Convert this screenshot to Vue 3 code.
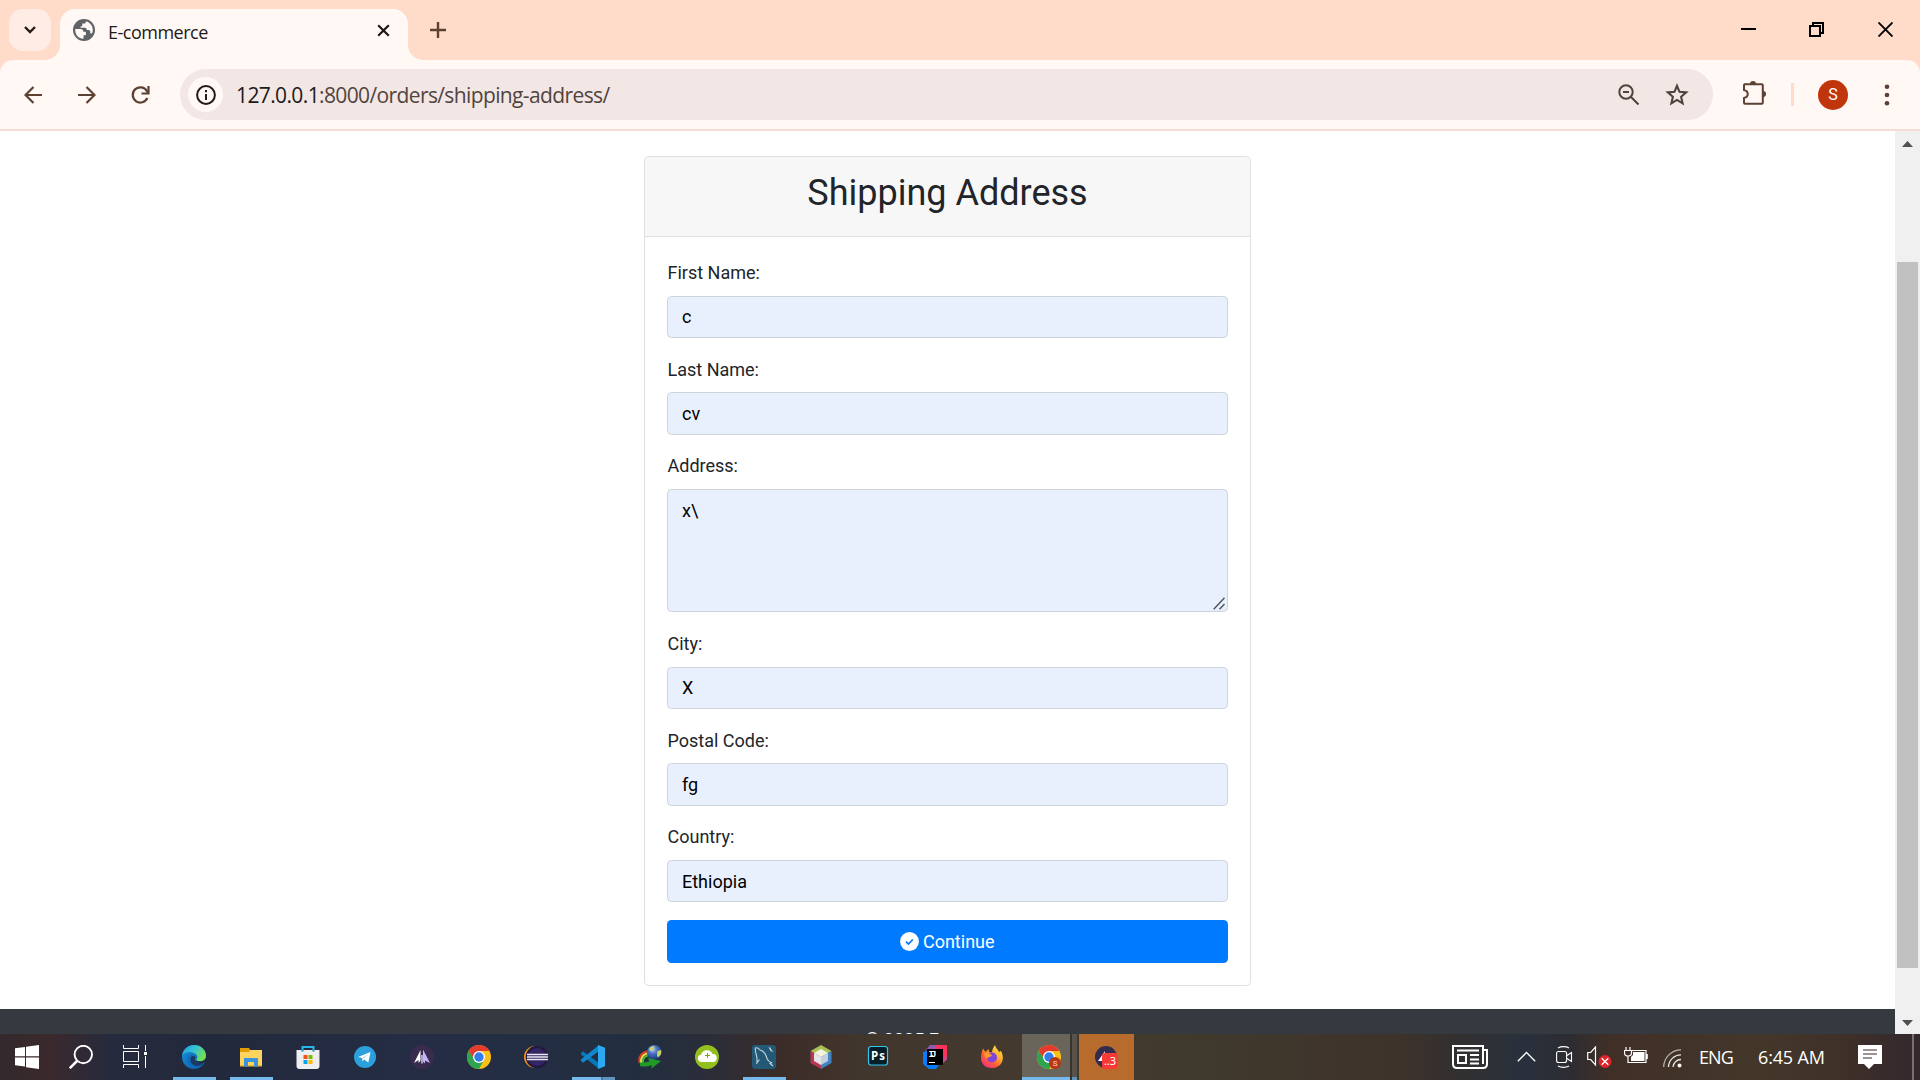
<script setup>
const fields = [
  { id: 'first', label: 'First Name:', value: 'c' },
  { id: 'last', label: 'Last Name:', value: 'cv' },
  { id: 'address', label: 'Address:', value: 'x\\', area: true },
  { id: 'city', label: 'City:', value: 'X' },
  { id: 'postal', label: 'Postal Code:', value: 'fg' },
  { id: 'country', label: 'Country:', value: 'Ethiopia' },
]
</script>

<template>
  <div class="screen">
    <header class="tabstrip">
      <button class="tabsearch" aria-label="Search tabs">
        <svg width="14" height="10" viewBox="0 0 14 10"><path d="M2 2l5 5 5-5" fill="none" stroke="#241a17" stroke-width="2.4" /></svg>
      </button>
      <div class="tab">
        <svg class="flare left" width="15" height="15"><path d="M15 0v15H0A15 15 0 0 0 15 0z" fill="#fff8f5" /></svg>
        <svg class="flare right" width="15" height="15"><path d="M0 0v15h15A15 15 0 0 1 0 0z" fill="#fff8f5" /></svg>
        <svg class="globe" width="22" height="22" viewBox="0 0 22 22">
          <circle cx="11" cy="11" r="11" fill="#5f6368" />
          <path d="M2.200 10h5.300c1.800 0 2.800 1 2.800 2.700H12c.6 0 .9.400.9 1v1.500c0 .7-.4 1-1 1h-1.400v3.500C5.500 19.700 2 16 2.200 10z" fill="#fff8f5" />
          <path d="M12.800 2.300c.2 1.600-.6 2.300-1.800 2.300H9.300v1.700c0 .8-.6 1.200-1.800 1.200v1.200h4.300c1.600 0 2 1 2 2.300h1.600c1.300 0 1.900.8 1.900 2v1.600h1.400c.9-1.300 1.200-2.600 1.100-4.200-.3-4-3-7.200-7-8.100z" fill="#fff8f5" />
        </svg>
        <span class="tabtitle">E-commerce</span>
        <svg width="13" height="13" viewBox="0 0 13 13"><path d="M1.200 1.200l10.600 10.600M11.800 1.200L1.200 11.800" stroke="#1d1613" stroke-width="2.200" /></svg>
      </div>
      <svg class="plus" width="16" height="16" viewBox="0 0 16 16"><path d="M8 0v16M0 8h16" stroke="#5c4032" stroke-width="2.400" /></svg>
      <div class="windowbtns">
        <svg width="15" height="15"><path d="M0 7h15" stroke="#000" stroke-width="2" /></svg>
        <svg width="15" height="15" fill="none" stroke="#000" stroke-width="2"><path d="M1 4h10v10H1zM4 4V1h10v10h-3" /></svg>
        <svg width="15" height="15"><path d="M.5.5l14 14M14.500.5l-14 14" stroke="#000" stroke-width="1.900" /></svg>
      </div>
    </header>

    <div class="toolwrap">
      <div class="toolbar">
        <svg class="nav" width="18" height="18" viewBox="0 0 18 18"><path d="M9.500 1L1.500 9l8 8M1.500 9H18" /></svg>
        <svg class="nav fwd" width="18" height="18" viewBox="0 0 18 18"><path d="M8.500 1l8 8-8 8M16.500 9H0" /></svg>
        <svg class="nav rel" width="19" height="20" viewBox="0 0 19 20"><path d="M16.300 13A7.600 7.600 0 1 1 16 6.200l1 1.800" /><path d="M17.500 1v7.500H10.500" /></svg>
        <div class="omnibox">
          <span class="info">
            <svg width="20" height="20" viewBox="0 0 20 20"><circle cx="10" cy="10" r="8.900" fill="none" stroke="#241a17" stroke-width="2" /><path d="M10 9v6M10 5v2.200" stroke="#241a17" stroke-width="2" /></svg>
          </span>
          <span class="url"><b>127.0.0.1</b>:8000/orders/shipping-address/</span>
          <svg class="zoomicon" width="22" height="22" viewBox="0 0 22 22" fill="none" stroke="#4f433e" stroke-width="2"><circle cx="8" cy="8" r="6.700" /><path d="M5 8h6M13 13l7.500 7.500" /></svg>
          <svg width="24" height="23" viewBox="0 0 24 23"><path d="M12 2.800l2.500 6 6.700.6-5.100 4.400 1.500 6.500L12 16.900l-5.600 3.400 1.500-6.500-5.100-4.400 6.700-.6z" fill="none" stroke="#4f433e" stroke-width="2.100" /></svg>
        </div>
        <svg class="puzzle" width="25" height="25" viewBox="0 0 25 25"><path d="M2 4.200h17.800q1 0 1 1v17.600q0 1-1 1H3q-1 0-1-1V18c5-1 5-7 0-8V5.200q0-1 1-1z" fill="none" stroke="#5c4032" stroke-width="2" /><path d="M8 4a3 3 0 0 1 6 0zM21 11a3 3 0 0 1 0 6z" fill="#5c4032" /></svg>
        <span class="divider"></span>
        <span class="avatar">S</span>
        <svg class="kebab" width="6" height="22" fill="#5c4032"><circle cx="3" cy="2.700" r="2.300" /><circle cx="3" cy="11" r="2.300" /><circle cx="3" cy="19.300" r="2.300" /></svg>
      </div>
    </div>

    <div class="viewport">
      <main class="page">
        <section class="card">
          <h2>Shipping Address</h2>
          <form class="cardbody" @submit.prevent>
            <div v-for="f in fields" :key="f.id" class="group">
              <label :for="f.id">{{ f.label }}</label>
              <div v-if="f.area" class="areabox">
                <textarea :id="f.id" rows="4" :value="f.value" spellcheck="false"></textarea>
                <svg width="12" height="13" viewBox="0 0 12 13"><path d="M.7 12.300L11.500.7M6.500 12.300l5-5.300" stroke="#50545b" stroke-width="1.400" /></svg>
              </div>
              <input v-else :id="f.id" :value="f.value" />
            </div>
            <button class="continue">
              <svg width="19" height="19" viewBox="0 0 19 19"><circle cx="9.500" cy="9.500" r="9.400" fill="#fff" /><path d="M6 9.700l2.400 2.400 4.400-4.600" fill="none" stroke="#007bff" stroke-width="1.700" /></svg>
              <span>Continue</span>
            </button>
          </form>
        </section>
        <footer>© 2025 E-commerce</footer>
      </main>
      <aside class="scrollbar">
        <svg width="11" height="6"><path d="M0 6L5.500 0 11 6z" fill="#505050" /></svg>
        <span class="thumb"></span>
        <svg width="11" height="6"><path d="M0 0l5.500 6L11 0z" fill="#505050" /></svg>
      </aside>
    </div>

    <nav class="taskbar">
      <div class="sys"><svg viewBox="0 0 24 24"><path d="M0 3.300L10 2v9.300H0zM11 1.800L24 0v11.300H11zM0 12.400h10v9.200L0 20.300zM11 12.400h13V24l-13-1.800z" fill="#fff" /></svg></div>
      <div class="sys"><svg viewBox="0 0 24 24" fill="none" stroke="#fff"><circle cx="14.300" cy="9.500" r="8.700" stroke-width="1.900" /><path d="M8 16L.8 23.200" stroke-width="2.500" /></svg></div>
      <div class="sys"><svg viewBox="0 0 24 24" fill="none" stroke="#fff"><path d="M.5 0v3.500h15V0M.5 6.500h15v10H.5zM.5 23v-3.500h15V23M22.500 0v6M22.500 11v12" stroke-width="1" /><path d="M22.500 7v3" stroke-width="3" /></svg></div>
      <div class="gap"></div>

      <div class="app open">
        <svg viewBox="0 0 24 24">
          <defs>
            <linearGradient id="edgeTop" x1="0" y1="0" x2="1" y2=".5"><stop offset="0" stop-color="#1b9de2" /><stop offset=".5" stop-color="#35c1d8" /><stop offset="1" stop-color="#6fe04f" /></linearGradient>
            <linearGradient id="edgeLow" x1="0" y1="0" x2="1" y2="1"><stop offset="0" stop-color="#1691dc" /><stop offset="1" stop-color="#0c59a4" /></linearGradient>
          </defs>
          <circle cx="12" cy="12" r="12" fill="url(#edgeLow)" />
          <path d="M.2 10.500C1 4.500 6 0 12 0c7 0 12 5 12 10.500 0 4-3 5.800-6 5.800-2.500 0-4-1-3.500-2 1.400-1.500 1-3.500-.3-4.800C11.500 6.500 4 5.500.2 10.500z" fill="url(#edgeTop)" />
          <path d="M8.500 13c-1.500 5 3.500 9.500 9 7.500 2-.7 3.600-1.800 4.800-3.300C20 18.200 16 18.500 14 16.500c-1.300-1.200-1.300-2.500-.5-4.500-1.500-1.500-4.300-1.200-5 1z" fill="#1b3a66" />
          <path d="M24 16.300c-1.500 1.300-4 2.200-6.500 1.800-2-.3-3.300-1-3.500-2.300l4 .7c2.500 0 4.500-1.200 5.700-3z" fill="#23293c" />
          <path d="M5.500 15C5 10 9.500 8.500 12.500 10c-6 0-6 9 1 11.500 1.500.5 3 .3 3.800 0C12 25.500 6 21 5.500 15z" fill="#136bb8" />
        </svg>
      </div>
      <div class="app open">
        <svg viewBox="0 0 24 24"><path d="M1 3h9l1.500 2.500V8H1z" fill="#e09d00" /><path d="M11 5h12v16H1V7h9z" fill="#ffd45e" /><path d="M1 20h22v1.500H1z" fill="#f0b93a" /><path d="M5 13h14v8.500h-4V17H9v4.500H5z" fill="#3a93dd" /></svg>
      </div>
      <div class="app">
        <svg viewBox="0 0 24 24"><path d="M6.500 6V2h11v4" fill="none" stroke="#28b5e8" stroke-width="2" /><path d="M.5 5h23v16q0 3-3 3h-17q-3 0-3-3z" fill="#eeeeee" /><path d="M5.500 5h2v1.500h-2zM16.500 5h2v1.500h-2z" fill="#1488c8" /><path d="M7.500 10h4v4h-4z" fill="#f25022" /><path d="M12.500 10h4v4h-4z" fill="#7fba00" /><path d="M7.500 15h4v4h-4z" fill="#00a4ef" /><path d="M12.500 15h4v4h-4z" fill="#ffb900" /></svg>
      </div>
      <div class="app">
        <svg viewBox="0 0 24 24"><circle cx="12" cy="12" r="11" fill="#2ba0dc" /><path d="M5 12l12.500-5-2.200 10.500-4-3-1.800 1.800-.3-3.300z" fill="#fff" /><path d="M9.200 13l6.500-4.200-4.900 5z" fill="#b7d8ec" /></svg>
      </div>
      <div class="app">
        <svg viewBox="0 0 24 24"><circle cx="12" cy="12" r="12" fill="#392b4e" /><path d="M10.500 5v10.500L8.500 18v-3L4 18z" fill="#fff" /><path d="M13 4.500L20 18l-5-2.500v3l-2-2z" fill="#c6b5f5" /><path d="M11 10h2v9l-1-1-1 1z" fill="#aaa0c7" /></svg>
      </div>
      <div class="app">
        <svg viewBox="0 0 24 24"><circle cx="12" cy="12" r="12" fill="#fbc116" /><path d="M1.600 6A12 12 0 0 0 12 24l5-9-9.500-1z" fill="#2da44e" /><path d="M1.600 6A12 12 0 0 1 22.400 6H12l-4.500 8z" fill="#e33b2e" /><circle cx="12" cy="12" r="6" fill="#fff" /><circle cx="12" cy="12" r="4.700" fill="#327ee9" /></svg>
      </div>
      <div class="app">
        <svg viewBox="0 0 24 24"><circle cx="11" cy="12" r="11" fill="#f7941e" /><circle cx="13" cy="12" r="11.300" fill="#211b43" /><circle cx="13" cy="12" r="9" fill="#352565" /><path d="M3 9.500h21M3 12h21M3 14.500h21" stroke="#e9e7f0" stroke-width="1.500" /></svg>
      </div>
      <div class="app open grouped">
        <svg viewBox="0 0 24 24"><path d="M0 8l2-1.700L18 18v6L0 9.500z" fill="#0877b9" /><path d="M0 16l2 1.700L18 6V0L0 14.500z" fill="#1387ce" /><path d="M17 0l7 2.800v18.400L17 24z" fill="#2aa9f2" /></svg>
      </div>
      <div class="app idm">
        <svg viewBox="0 0 24 24">
          <defs><radialGradient id="ball" cx=".4" cy=".3" r=".7"><stop offset="0" stop-color="#b9cdf0" /><stop offset=".4" stop-color="#4a74c4" /><stop offset="1" stop-color="#16357c" /></radialGradient></defs>
          <g fill="none" stroke-width="1.900"><path d="M1.500 18C0 11 5 5.500 12 6.500" stroke="#e23a2a" /><path d="M3.200 18C2.200 12.500 6 8 12 8.300" stroke="#f6e13b" /><path d="M5 18c-.8-4.500 2-7.500 7-8" stroke="#49b53a" /></g>
          <circle cx="16.300" cy="7.500" r="7.400" fill="url(#ball)" />
          <path d="M11 4c1.500-2.500 4-3 5.500-2.500-.5 2-2.500 2.500-2.500 4.500-1.500.5-2.500-.5-3-2zM19.500 6l3.500-1c1 3-.5 6-3 7.500-1.500-2-1-4.500-.5-6.500z" fill="#ccd25e" />
          <path d="M2 17.500q5 .5 9.500-1.200L10 13l13 3-9.500 7.500.2-3.500Q8 22.500 2 21z" fill="#229a26" />
        </svg>
      </div>
      <div class="app">
        <svg viewBox="0 0 24 24"><circle cx="12" cy="12" r="12" fill="#93c01f" /><path d="M6 17a3.800 3.800 0 0 1 .2-7.500A6 6 0 0 1 17.500 9a4 4 0 0 1 .5 8z" fill="#fff" /><path d="M12.500 8v5M10 10.500h5" stroke="#74a40d" stroke-width="1" /></svg>
      </div>
      <div class="app open">
        <svg viewBox="0 0 24 24"><rect width="24" height="24" rx="3" fill="#235877" /><path d="M4.500 19c1-2 .5-4 .3-6.500C4.600 9 2.500 5.500 3.500 3c2-.8 3.500.8 4.500 2 4 1 6 4.500 7 8.500.6 2 2.500 3.500 4.500 4.300l-1.500.7 3 2.500M4.800 18l2.700-3.500" fill="none" stroke="#c6d7df" stroke-width="1.100" /><path d="M16.500 2l2 .8 1 2L21.500 7l-3-1z" fill="#c6d7df" /></svg>
      </div>
      <div class="app">
        <svg viewBox="0 0 24 24"><path d="M12 0l10.500 6L12 12 1.500 6z" fill="#a9bf54" /><path d="M1.500 6L12 12v12L1.500 18z" fill="#b73555" /><path d="M22.500 6L12 12v12l10.500-6z" fill="#4283c4" /><path d="M12 4l7 4-7 4-7-4z" fill="#f1f3df" /><path d="M5 8l7 4v8l-7-4z" fill="#e4e4e6" /><path d="M19 8l-7 4v8l7-4z" fill="#c1cfdf" /></svg>
      </div>
      <div class="app">
        <svg viewBox="0 0 24 24"><rect x="2.500" y="1.500" width="19" height="18.500" rx="2.500" fill="#071e28" stroke="#31c5f0" stroke-width="1.200" /><text x="5" y="15" font-size="11.500" font-weight="700" font-family="Noto Sans, sans-serif" fill="#fff" textLength="14">Ps</text></svg>
      </div>
      <div class="app">
        <svg viewBox="0 0 24 24"><path d="M0 7l7-2v15h9l-3 4H6l-6-5z" fill="#087cfa" /><path d="M7 0h12v5H4L2 6z" fill="#8f5bb5" /><path d="M13 0h11v14l-6 6V5h-5z" fill="#fe315d" /><path d="M20 14l4-3v3l-6 6h2z" fill="#c04d93" /><rect x="4" y="4" width="16" height="16" fill="#000" /><text x="5.500" y="12" font-size="9" font-weight="700" font-family="Liberation Mono, monospace" fill="#fff" textLength="8">IJ</text><path d="M6 17.500h6" stroke="#fff" /></svg>
      </div>
      <div class="app">
        <svg viewBox="0 0 24 24">
          <defs><linearGradient id="fox" x1="1" y1="0" x2=".2" y2="1"><stop offset="0" stop-color="#fff44f" /><stop offset=".4" stop-color="#ffb22e" /><stop offset=".7" stop-color="#ff5b36" /><stop offset="1" stop-color="#f0308a" /></linearGradient></defs>
          <path d="M1 13C1 9 2.500 5 3 3.500L5.500 7l3-3 .5 3 3 .5C12 5 13.500 2 15 0c1 4 3 4 4 7l2-1c2 4 2.500 7 1 11-2 4-6 6-10.500 6C5.500 23 1 19 1 13z" fill="url(#fox)" /><circle cx="12" cy="12.500" r="5" fill="#8046dc" /><path d="M4 8c3 0 5 0 8 2-1 3-4 1-5 4C5 13 4 10 4 8z" fill="#ff9626" />
        </svg>
      </div>
      <div class="app current">
        <svg viewBox="0 0 24 24"><circle cx="12" cy="12" r="12" fill="#fbc116" /><path d="M1.600 6A12 12 0 0 0 12 24l5-9-9.500-1z" fill="#2da44e" /><path d="M1.600 6A12 12 0 0 1 22.400 6H12l-4.500 8z" fill="#e33b2e" /><circle cx="12" cy="12" r="6" fill="#fff" /><circle cx="12" cy="12" r="4.700" fill="#327ee9" /><circle cx="18" cy="18" r="6" fill="#b93613" /><text x="18" y="21" text-anchor="middle" font-size="8" font-family="Roboto, sans-serif" fill="#ffd9cc">S</text></svg>
      </div>
      <div class="app alert">
        <svg viewBox="0 0 24 24"><circle cx="12" cy="12" r="11" fill="#332b4d" /><path d="M11 6L4 16h6z" fill="#fff" /><rect x="8" y="8" width="16" height="16" rx="3" fill="#f93a37" /><text x="16" y="20" text-anchor="middle" font-size="11" font-family="Noto Sans, sans-serif" fill="#fff">..3</text></svg>
      </div>

      <div class="tray">
        <svg class="news" width="36" height="24" viewBox="0 0 36 24" fill="none" stroke="#fff" stroke-width="2"><path d="M31 4V1H1v18q0 4 4 4h26q4 0 4-4V5h-4v14" /><path d="M5 5.500h22M18 10h9M18 14.500h9M18 18.500h9M6 10h8v8H6z" /></svg>
        <svg class="up" width="19" height="11"><path d="M.8 10.200L9.500 1.500l8.700 8.700" fill="none" stroke="#fff" stroke-width="1.300" /></svg>
        <svg class="cam" width="17" height="22" viewBox="0 0 17 22" fill="none" stroke="#fff" stroke-width="1.100"><rect x=".6" y="5.500" width="10" height="11" rx="2" /><path d="M11 9.500l4.500-3v9l-4.500-3M2 2c3-1.800 8-1.800 11 0M2 20c3 1.800 8 1.800 11 0" /></svg>
        <svg class="spk" width="25" height="22" viewBox="0 0 25 22"><path d="M.7 6.500h3L8.500 1v18l-4.800-5.500h-3z" fill="none" stroke="#fff" stroke-width="1.200" /><circle cx="18" cy="15.500" r="6.500" fill="#dd242b" /><path d="M14.700 12.200l6.600 6.600M21.300 12.200l-6.600 6.600" stroke="#fff" stroke-width="1.300" /></svg>
        <svg class="bat" width="24" height="17" viewBox="0 0 24 17"><path d="M8 3.500h14v12H5M23.200 7v5" fill="none" stroke="#fff" stroke-width="1.200" /><path d="M9 5h11.500v9H7v-4l2-2z" fill="#fff" /><path d="M2 0v3M6 0v3M.5 3.500h7V6q0 3-3.500 3T.5 6zM4 9v6.500h4" fill="none" stroke="#fff" stroke-width="1.200" /></svg>
        <svg class="wifi" width="19" height="19" viewBox="0 0 19 19" fill="none" stroke="#b9b2ad" stroke-width="1.300"><path d="M.7 18A17.500 17.500 0 0 1 18 .8" /><path d="M5.500 18A12.500 12.500 0 0 1 18 5.800M10 18a8 8 0 0 1 8-7.500" stroke="#e9e6e4" /><circle cx="16.500" cy="16.500" r="1.400" fill="#fff" stroke="#fff" /></svg>
        <span class="lang">ENG</span>
        <span class="clock">6:45 AM</span>
        <svg class="note" width="24" height="24"><path d="M0 0h24v19h-8l-5 5-5-5H0z" fill="#fff" /><path d="M5 5h14M5 9h14M5 13h9" stroke="#3a2b28" stroke-width="1.200" /></svg>
        <span class="desktop"></span>
      </div>
    </nav>
  </div>
</template>

<style>
body { margin: 0; overflow: hidden; }
</style>

<style scoped>
* { box-sizing: border-box; }
.screen { width: 1920px; height: 1080px; display: flex; flex-direction: column; background: #fff; overflow: hidden; }
svg { display: block; flex: none; }

.tabstrip { height: 60px; flex: none; display: flex; padding: 9px 27px 0 9px; background: #ffdbc9; font-family: "Open Sans", "Noto Sans", sans-serif; }
.tabsearch { width: 42px; height: 42px; padding: 0; border: 0; border-radius: 14px; background: #ffece4; display: flex; align-items: center; justify-content: center; }
.tab { position: relative; width: 348px; height: 51px; margin-left: 9px; padding: 0 18px 9px 13px; border-radius: 15px 15px 0 0; background: #fff8f5; display: flex; align-items: center; }
.flare { position: absolute; bottom: 0; }
.flare.left { left: -15px; }
.flare.right { right: -15px; }
.tabtitle { flex: 1; margin: 3px 0 0 13px; font-size: 18px; line-height: 24px; letter-spacing: -.5px; color: #241a17; }
.plus { margin: 13px 0 0 22px; }
.windowbtns { margin: 13px 0 0 auto; display: flex; gap: 54px; }
.windowbtns svg:first-child { margin-right: -1px; }

.toolwrap { height: 71px; flex: none; background: #ffdbc9; }
.toolbar { height: 71px; border-radius: 13px 13px 0 0; border-bottom: 2px solid #f3dcd2; background: #fff8f5; display: flex; align-items: center; padding-left: 24px; }
.nav { fill: none; stroke: #5c4032; stroke-width: 2.2; }
.fwd { margin-left: 36px; }
.rel { margin-left: 35px; }
.omnibox { width: 1533px; height: 51px; margin-left: 30px; padding: 0 24px 0 8px; border-radius: 26px; background: #f2e7e4; display: flex; align-items: center; }
.info { width: 35px; height: 35px; border-radius: 50%; background: #fff8f5; display: flex; align-items: center; justify-content: center; }
.url { flex: 1; margin-left: 13px; font: 21px/30px "Open Sans", "Noto Sans", sans-serif; letter-spacing: -.62px; color: #51443f; }
.url b { font-weight: 400; color: #201a18; }
.zoomicon { margin-right: 25px; }
.puzzle { margin: -4px 0 0 29px; }
.divider { width: 3px; height: 23px; margin-left: 24px; background: #ffdbc9; }
.avatar { width: 30px; height: 30px; margin-left: 24px; border-radius: 50%; background: #c0350c; color: #fff; font: 16px/30px Roboto, sans-serif; text-align: center; }
.kebab { margin-left: 36px; }

.viewport { height: 903px; flex: none; display: flex; overflow: hidden; }
.page { width: 1895px; padding-top: 25.3px; font-family: Roboto, sans-serif; font-size: 18px; line-height: 27px; color: #212529; }
.card { width: 607px; margin: 0 auto; border: 1px solid #dfdfdf; border-radius: 4.5px; background: #fff; }
h2 { margin: 0; padding: 14.5px 22.5px 20.5px; font-size: 36px; line-height: 43.2px; font-weight: 400; text-align: center; background: #f7f7f7; border-bottom: 1px solid #dfdfdf; border-radius: 4px 4px 0 0; }
.cardbody { padding: 22.5px 22.5px 22.5px 22px; }
.group { display: flex; flex-direction: column; margin-bottom: 17.7px; }
.group:nth-last-child(2) { margin-bottom: 18px; }
label { margin-bottom: 9.5px; padding-left: .5px; }
input, textarea { display: block; width: 100%; height: 42.5px; margin: 0; padding: 6.75px 14px; border: 1px solid #ced4da; border-radius: 4.5px; background: #e8f0fe; color: #000; font: 18px/27px Roboto, sans-serif; outline: 0; }
textarea { height: 123.5px; resize: none; overflow: hidden; }
.areabox { position: relative; }
.areabox svg { position: absolute; right: 3px; bottom: 2px; }
.continue { width: 100%; height: 42.5px; padding: 0; border: 0; border-radius: 4.5px; background: #007bff; color: #fff; font: 18px/27px Roboto, sans-serif; display: flex; align-items: center; justify-content: center; gap: 4px; }
footer { height: 80px; margin-top: 22.5px; padding-top: 17px; background: #343a40; color: #fff; text-align: center; }
.scrollbar { width: 25px; height: 903px; background: #f0f0f0; padding: 10px 0 8px; display: flex; flex-direction: column; align-items: center; justify-content: space-between; }
.thumb { width: 21px; height: 706px; margin: 63px 0 0; background: #c1c1c1; }

.taskbar { position: relative; z-index: 1; height: 46px; flex: none; display: flex; background: linear-gradient(90deg, #33292c 0, #3b292c 50px, #262a3d 110px, #23293c 200px, #242d44 430px, #222e40 640px, #2b2d38 710px, #3b2c29 780px, #41362c 860px, #443a2f 1050px, #403a2d 1180px, #3e322b 1400px, #33302f 1450px, #29303d 1525px, #2d2c31 1570px, #402f27 1610px, #43372a 1760px, #3f3028 1840px, #34282d 1915px); }
.sys { width: 54px; height: 46px; display: flex; align-items: center; justify-content: center; }
.gap { width: 3.5px; }
.app { position: relative; width: 57px; height: 46px; display: flex; align-items: center; justify-content: center; }
.sys svg, .app svg { position: relative; width: 24px; height: 24px; }
.open::after { content: ""; position: absolute; left: 7.5px; bottom: 0; width: 43px; height: 3px; background: #76b9ed; }
.grouped::after { background: linear-gradient(90deg, #76b9ed 29px, #4a779b 29px, #4a779b 31px, #5e94be 31px); }
.current::before { content: ""; position: absolute; left: 1.5px; top: 0; width: 55px; height: 46px; background: linear-gradient(#76b9ed, #76b9ed) 0 43px / 48px 3px no-repeat, linear-gradient(#5e94be, #5e94be) 50px 43px / 5px 3px no-repeat, linear-gradient(90deg, #6a655a 48px, #3a352c 48px, #3a352c 50px, #57534a 50px); }
.alert::before { content: ""; position: absolute; left: 1.5px; top: 0; width: 55px; height: 46px; background: #b76c2e; border-bottom: 3px solid #ff7800; }
.tray { flex: 1; display: flex; align-items: center; padding-right: 6px; justify-content: flex-end; color: #fff; font: 18px/24px "Open Sans", "Noto Sans", sans-serif; }
.up { margin: -1px 0 0 29px; }
.cam { margin-left: 20px; }
.spk { margin-left: 14px; }
.bat { margin: -3px 0 0 12px; }
.wifi { margin: 3px 0 0 15px; }
.lang { width: 40px; margin-left: 17px; letter-spacing: -.9px; white-space: nowrap; }
.clock { width: 82px; margin-left: 19px; letter-spacing: -.15px; white-space: nowrap; }
.note { margin-left: 18px; }
.desktop { width: 2px; height: 46px; margin-left: 30px; background: #77706f; }
</style>
